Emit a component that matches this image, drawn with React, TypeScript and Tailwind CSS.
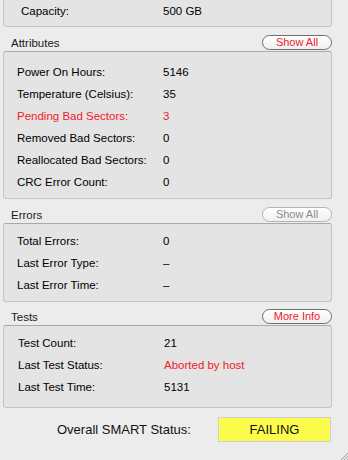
import React from 'react';

const font = { fontFamily: '"Liberation Sans", Arial, sans-serif' };

type Row = { label: string; value: string; alert?: 'both' | 'value' };

const PillButton: React.FC<{ label: string; disabled?: boolean }> = ({ label, disabled }) => (
  <button
    className={`h-[15px] w-[70px] rounded-full border text-[11px] leading-[13px] bg-gradient-to-b from-white to-[#f0f0f0] ${
      disabled ? 'border-[#b4b4b4] text-[#8a8a8a]' : 'border-[#6e6e6e] text-[#f0202a]'
    }`}
  >
    {label}
  </button>
);

const Panel: React.FC<{ rows: Row[]; className?: string }> = ({ rows, className }) => (
  <div
    className={`ml-[3px] w-[329px] rounded-[3px] border border-[#c4c4c4] border-t-[#a9a9a9] bg-[#e4e4e4] pl-[13px] ${className ?? ''}`}
  >
    {rows.map((r) => (
      <div key={r.label} className="flex h-[22px] items-center text-[11.5px] text-black">
        <span className={`w-[146px] ${r.alert === 'both' ? 'text-[#f0202a]' : ''}`}>{r.label}</span>
        <span className={r.alert ? 'text-[#f0202a]' : ''}>{r.value}</span>
      </div>
    ))}
  </div>
);

const SectionHeader: React.FC<{ title: string; button: string; disabled?: boolean; className?: string }> = ({
  title,
  button,
  disabled,
  className,
}) => (
  <div className={`flex h-[16px] items-end justify-between pl-[11px] pr-[16px] ${className ?? ''}`}>
    <span className="text-[11.5px] leading-[13px] text-[#1a1a1a]">{title}</span>
    <PillButton label={button} disabled={disabled} />
  </div>
);

export default function App() {
  return (
    <div className="relative h-[460px] w-[348px] overflow-hidden bg-[#ececec]" style={font}>
      {/* Capacity panel, cut off at top */}
      <div className="-mt-[8px] ml-[3px] flex h-[35px] w-[329px] items-end rounded-[3px] border border-[#c4c4c4] bg-[#e4e4e4] pb-[4px] pl-[17px] text-[11.5px]">
        <span className="w-[142px] leading-[22px]">Capacity:</span>
        <span className="leading-[22px]">500 GB</span>
      </div>

      <SectionHeader title="Attributes" button="Show All" className="mt-[7px] mb-[1px]" />
      <Panel
        className="pt-[10px] pb-[4px]"
        rows={[
          { label: 'Power On Hours:', value: '5146' },
          { label: 'Temperature (Celsius):', value: '35' },
          { label: 'Pending Bad Sectors:', value: '3', alert: 'both' },
          { label: 'Removed Bad Sectors:', value: '0' },
          { label: 'Reallocated Bad Sectors:', value: '0' },
          { label: 'CRC Error Count:', value: '0' },
        ]}
      />

      <SectionHeader title="Errors" button="Show All" disabled className="mt-[7px] mb-[1px]" />
      <Panel
        className="pt-[7px] pb-[4px]"
        rows={[
          { label: 'Total Errors:', value: '0' },
          { label: 'Last Error Type:', value: '–' },
          { label: 'Last Error Time:', value: '–' },
        ]}
      />

      <SectionHeader title="Tests" button="More Info" className="mt-[6px] mb-[1px]" />
      <Panel
        className="pt-[7px] pb-[8px] pl-[14px]"
        rows={[
          { label: 'Test Count:', value: '21' },
          { label: 'Last Test Status:', value: 'Aborted by host', alert: 'value' },
          { label: 'Last Test Time:', value: '5131' },
        ]}
      />

      <div className="mt-[9px] flex items-center">
        <span className="ml-[57px] w-[161px] text-[13px] text-[#111]">Overall SMART Status:</span>
        <div className="flex h-[25px] w-[113px] items-center justify-center border border-[#d0d0d0] bg-[#fcfc4c] text-[13px] text-[#111]">
          FAILING
        </div>
      </div>

      {/* resize grip */}
      <svg className="absolute bottom-0 right-0" width="8" height="8" viewBox="0 0 8 8">
        <line x1="8" y1="1" x2="1" y2="8" stroke="#9a9a9a" strokeWidth="1" />
        <line x1="8" y1="4" x2="4" y2="8" stroke="#9a9a9a" strokeWidth="1" />
        <line x1="8" y1="7" x2="7" y2="8" stroke="#9a9a9a" strokeWidth="1" />
      </svg>
    </div>
  );
}
